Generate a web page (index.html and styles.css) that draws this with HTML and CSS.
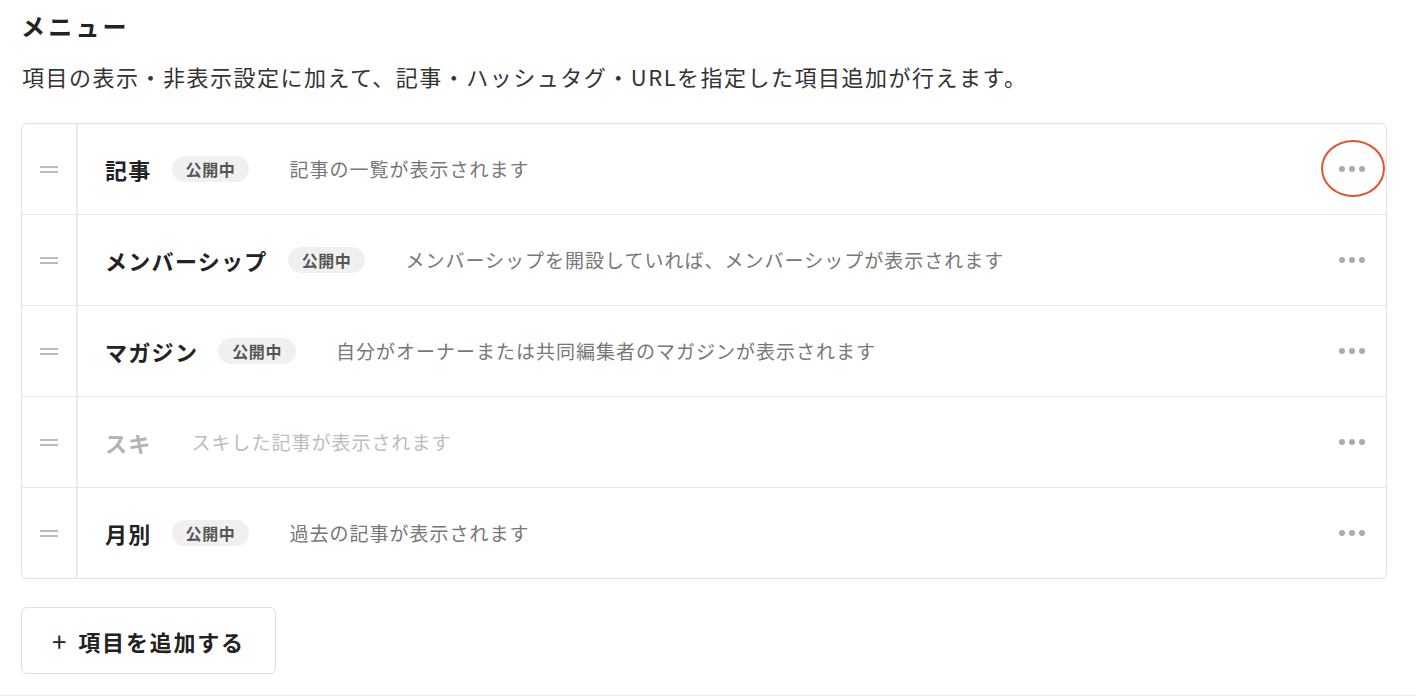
FILE: index.html
```html
<!DOCTYPE html>
<html lang="ja">
<head>
<meta charset="utf-8">
<link rel="stylesheet" href="styles.css">
</head>
<body>
<div class="page">
  <h1 class="title">メニュー</h1>
  <p class="lead">項目の表示・非表示設定に加えて、記事・ハッシュタグ・URLを指定した項目追加が行えます。</p>
  <div class="list">
    <div class="row">
      <div class="handle"><span class="bars"></span></div>
      <div class="main">
        <span class="name">記事</span><span class="badge">公開中</span><span class="desc">記事の一覧が表示されます</span>
      </div>
      <div class="more"><span class="dots"><i></i><i></i><i></i></span><span class="mark"></span></div>
    </div>
    <div class="row">
      <div class="handle"><span class="bars"></span></div>
      <div class="main">
        <span class="name">メンバーシップ</span><span class="badge">公開中</span><span class="desc">メンバーシップを開設していれば、メンバーシップが表示されます</span>
      </div>
      <div class="more"><span class="dots"><i></i><i></i><i></i></span></div>
    </div>
    <div class="row">
      <div class="handle"><span class="bars"></span></div>
      <div class="main">
        <span class="name">マガジン</span><span class="badge">公開中</span><span class="desc">自分がオーナーまたは共同編集者のマガジンが表示されます</span>
      </div>
      <div class="more"><span class="dots"><i></i><i></i><i></i></span></div>
    </div>
    <div class="row is-hidden">
      <div class="handle"><span class="bars"></span></div>
      <div class="main">
        <span class="name">スキ</span><span class="desc">スキした記事が表示されます</span>
      </div>
      <div class="more"><span class="dots"><i></i><i></i><i></i></span></div>
    </div>
    <div class="row">
      <div class="handle"><span class="bars"></span></div>
      <div class="main">
        <span class="name">月別</span><span class="badge">公開中</span><span class="desc">過去の記事が表示されます</span>
      </div>
      <div class="more"><span class="dots"><i></i><i></i><i></i></span></div>
    </div>
  </div>
  <button class="add"><span class="plus">+</span>項目を追加する</button>
</div>
</body>
</html>
```
FILE: styles.css
```css
* { box-sizing: border-box; }
html, body { margin: 0; padding: 0; background: #fff; }
body {
  font-family: "Noto Sans CJK JP", "Noto Sans", sans-serif;
  color: #222;
  width: 1416px;
  height: 696px;
  overflow: hidden;
  border-bottom: 1px solid #ececec;
}
.page {
  padding: 8px 29px 0 21px;
}
.title {
  margin: 0;
  font-size: 24px;
  line-height: 36px;
  font-weight: 700;
  letter-spacing: 3.2px;
  color: #222;
}
.lead {
  margin: 14px 0 0 1px;
  font-size: 22px;
  line-height: 36px;
  letter-spacing: 1.5px;
  color: #333;
}
.list {
  margin-top: 29px;
  border: 1px solid #e3e3e3;
  border-radius: 6px;
  width: 1366px;
}
.row {
  display: flex;
  align-items: stretch;
  height: 91px;
  border-top: 1px solid #e6e6e6;
}
.row:first-child { border-top: 0; height: 90px; }
.handle {
  width: 56px;
  border-right: 2px solid #ececec;
  display: flex;
  align-items: center;
  justify-content: center;
}
.bars {
  display: block;
  width: 18px;
  height: 7px;
  border-top: 2px solid #bcbcbc;
  border-bottom: 2px solid #bcbcbc;
}
.main {
  flex: 1;
  display: flex;
  align-items: center;
  padding-left: 27px;
  padding-bottom: 1px;
}
.name {
  font-size: 22px;
  font-weight: 700;
  color: #222;
  letter-spacing: 1.3px;
}
.badge {
  margin-left: 20px;
  height: 26px;
  padding: 0 14px;
  border-radius: 13px;
  background: #f0f0f0;
  color: #555;
  font-size: 16px;
  font-weight: 700;
  line-height: 26px;
  letter-spacing: 0.6px;
}
.desc {
  margin-left: 40px;
  font-size: 19px;
  color: #777;
  letter-spacing: 1px;
}
.is-hidden .name { color: #b3b3b3; }
.is-hidden .desc { color: #bdbdbd; }
.more {
  position: relative;
  width: 70px;
  display: flex;
  align-items: center;
  justify-content: flex-start;
  padding-left: 23px;
}
.dots {
  display: flex;
  gap: 4px;
}
.dots i {
  display: block;
  width: 6px;
  height: 6px;
  border-radius: 50%;
  background: #a9abb0;
}
.mark {
  position: absolute;
  left: 5px;
  top: 16px;
  width: 64px;
  height: 57px;
  border: 2.5px solid #e0532e;
  border-radius: 50%;
}
.add {
  margin-top: 28px;
  width: 255px;
  height: 67px;
  border: 1.5px solid #e0e0e0;
  border-radius: 6px;
  background: #fff;
  font-family: "Noto Sans CJK JP", "Noto Sans", sans-serif;
  font-size: 22px;
  font-weight: 700;
  color: #222;
  display: flex;
  align-items: center;
  justify-content: center;
  letter-spacing: 1.8px;
  padding: 0;
}
.plus {
  font-weight: 400;
  font-size: 26px;
  margin-right: 10px;
  line-height: 1;
}
```
